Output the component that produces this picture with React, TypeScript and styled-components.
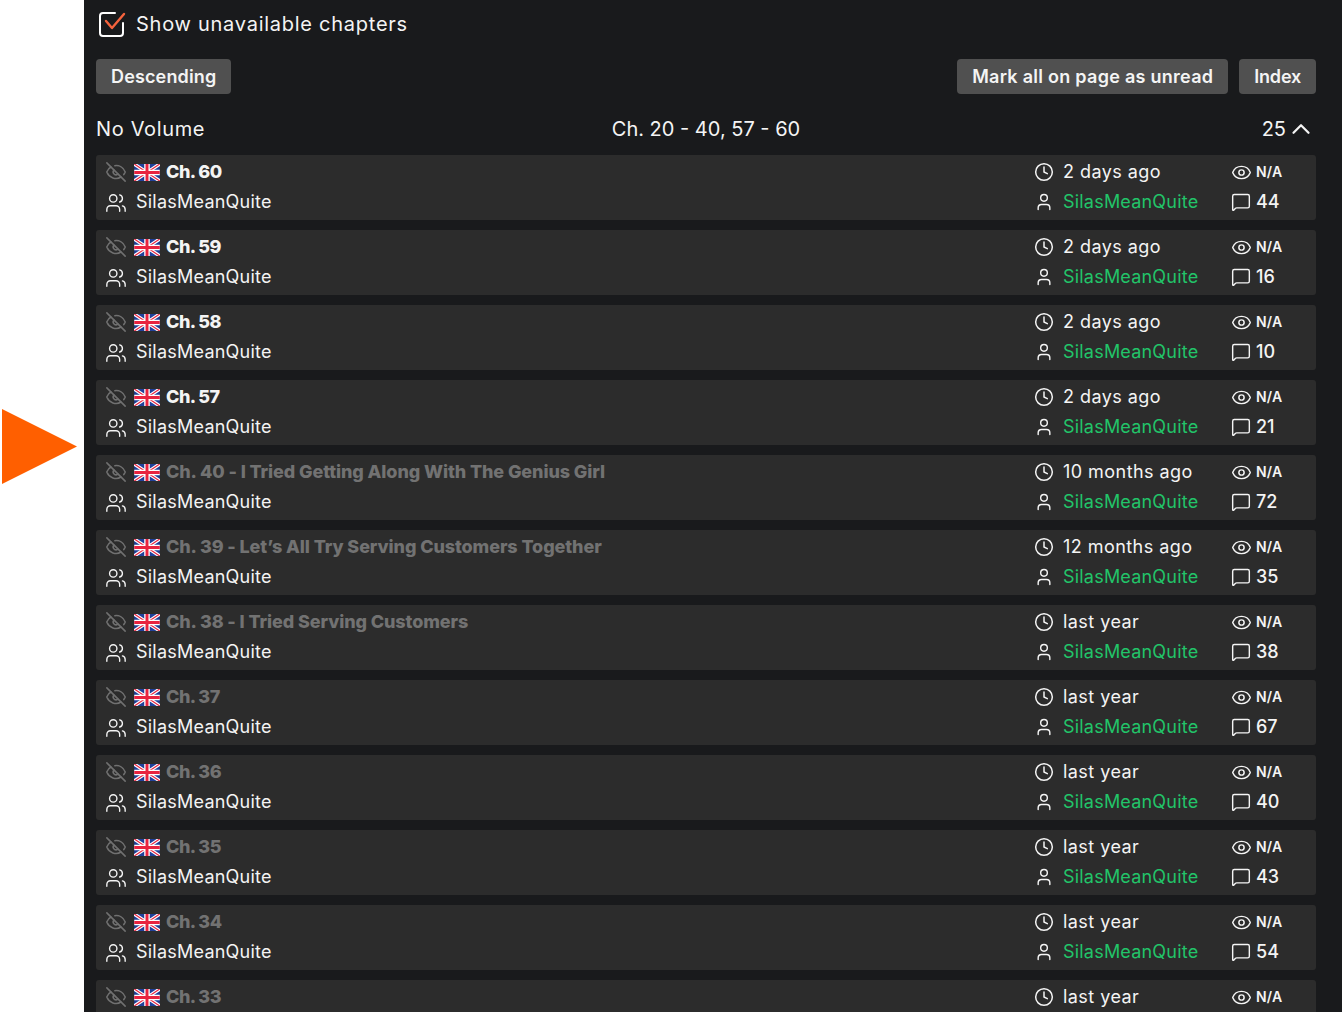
import React from 'react';
import styled, { createGlobalStyle } from 'styled-components';
import { ChevronUp, Clock, Eye, EyeOff, MessageSquare, User, Users } from 'lucide-react';

const Global = createGlobalStyle`
  html, body { margin: 0; padding: 0; background: #fff; height: 1012px; overflow: hidden; }
  #root { height: 1012px; overflow: hidden; }
  * { box-sizing: border-box; }
`;

const Page = styled.div`
  position: relative;
  height: 1012px;
  padding-left: 84px;
  overflow: hidden;
  font-family: Inter, "Noto Sans", sans-serif;
  color: #f4f4f4;
`;
const Marker = styled.svg`
  position: absolute;
  left: 1px;
  top: 408px;
`;
const Panel = styled.main`
  height: 100%;
  background: #191a1c;
  padding: 0 26px 0 12px;
  overflow: hidden;
`;
const CheckRow = styled.label`
  display: flex;
  align-items: center;
  gap: 10px;
  height: 48px;
  padding-left: 2px;
  font-size: 20px;
  letter-spacing: 0.74px;
`;
const Toolbar = styled.div`
  display: flex;
  gap: 11px;
  margin-top: 11px;
`;
const Button = styled.button<{ $tracking?: number }>`
  height: 35px;
  padding: 0 15px;
  border: 0;
  border-radius: 4px;
  background: #505050;
  color: #f4f4f4;
  font: 600 18px Inter, sans-serif;
  letter-spacing: ${(p) => p.$tracking ?? 0}px;
  white-space: nowrap;
`;
const Spacer = styled.div`
  flex: 1;
`;
const VolumeRow = styled.div`
  display: grid;
  grid-template-columns: 1fr auto 1fr;
  align-items: center;
  height: 61px;
  padding-top: 9px;
  font-size: 20px;
`;
const VolumeName = styled.span`
  letter-spacing: 0.65px;
`;
const VolumeEnd = styled.div`
  display: flex;
  align-items: center;
  justify-content: flex-end;
  gap: 0;
`;
const List = styled.div`
  display: flex;
  flex-direction: column;
  gap: 10px;
`;
const Row = styled.article`
  display: grid;
  grid-template-columns: 1fr 197px 85px;
  grid-auto-rows: 30px;
  flex: none;
  height: 65px;
  padding: 2px 0 3px 10px;
  border-radius: 3px;
  background: #2c2c2c;
  font-size: 18px;
`;
const Cell = styled.div<{ $gap?: number }>`
  display: flex;
  align-items: center;
  gap: ${(p) => p.$gap ?? 10}px;
  white-space: nowrap;
  min-width: 0;
`;
const HiddenIcon = styled(EyeOff)`
  flex: none;
  margin: 0 -1px;
`;
const GroupIcon = styled(Users)`
  flex: none;
  margin: 1px -1px 0;
`;
const Flag = styled.svg`
  flex: none;
  margin-left: -2px;
  margin-right: -4px;
`;
const ChapterTitle = styled.span<{ $muted: boolean; $short: boolean }>`
  padding-bottom: 2px;
  font-weight: 800;
  font-size: 18px;
  letter-spacing: ${(p) => (p.$short ? -0.5 : -0.1)}px;
  color: ${(p) => (p.$muted ? '#727272' : '#f4f4f4')};
`;
const Time = styled.span`
  padding-bottom: 2px;
  letter-spacing: 0.45px;
`;
const Credit = styled.span<{ $green?: boolean }>`
  padding-bottom: 2px;
  letter-spacing: ${(p) => (p.$green ? 0.2 : 0.23)}px;
  color: ${(p) => (p.$green ? '#22c469' : '#f4f4f4')};
`;
const NA = styled.span`
  padding-bottom: 2px;
  font-size: 14px;
  font-weight: 600;
  letter-spacing: 0.2px;
`;
const Count = styled.span`
  padding-bottom: 2px;
  font-weight: 500;
`;

const UnionJack = () => (
  <Flag width="26" height="17" viewBox="0 0 60 40" aria-hidden="true">
    <rect width="60" height="40" fill="#1f3f9a" />
    <path d="M0 0L60 40M60 0L0 40" stroke="#fff" strokeWidth="8" />
    <path d="M0 0L60 40M60 0L0 40" stroke="#e8233f" strokeWidth="3" />
    <path d="M30 0V40M0 20H60" stroke="#fff" strokeWidth="13" />
    <path d="M30 0V40M0 20H60" stroke="#e8233f" strokeWidth="7" />
  </Flag>
);

const rows: [string, string, string | null, boolean][] = [
  ['Ch. 60', '2 days ago', '44', false],
  ['Ch. 59', '2 days ago', '16', false],
  ['Ch. 58', '2 days ago', '10', false],
  ['Ch. 57', '2 days ago', '21', false],
  ['Ch. 40 - I Tried Getting Along With The Genius Girl', '10 months ago', '72', true],
  ['Ch. 39 - Let’s All Try Serving Customers Together', '12 months ago', '35', true],
  ['Ch. 38 - I Tried Serving Customers', 'last year', '38', true],
  ['Ch. 37', 'last year', '67', true],
  ['Ch. 36', 'last year', '40', true],
  ['Ch. 35', 'last year', '43', true],
  ['Ch. 34', 'last year', '54', true],
  ['Ch. 33', 'last year', null, true],
];

export default function App() {
  return (
    <Page>
      <Global />
      <Marker width="78" height="78" viewBox="0 0 78 78" aria-hidden="true">
        <path d="M1 1L76 38.5L1 76Z" fill="#ff5f00" />
      </Marker>
      <Panel>
        <CheckRow>
          <svg width="28" height="28" viewBox="0 0 28 28" fill="none" aria-hidden="true">
            <path d="M25 13v10a3 3 0 0 1-3 3H5a3 3 0 0 1-3-3V6a3 3 0 0 1 3-3h12" stroke="#fff" strokeWidth="2" strokeLinecap="round" />
            <path d="M8 11l6 7L26 4" stroke="#f5633d" strokeWidth="2.4" strokeLinecap="round" strokeLinejoin="round" />
          </svg>
          Show unavailable chapters
        </CheckRow>
        <Toolbar>
          <Button $tracking={0.15}>Descending</Button>
          <Spacer />
          <Button $tracking={0.27}>Mark all on page as unread</Button>
          <Button $tracking={-0.2}>Index</Button>
        </Toolbar>
        <VolumeRow>
          <VolumeName>No Volume</VolumeName>
          <span>Ch. 20 - 40, 57 - 60</span>
          <VolumeEnd>
            25
            <ChevronUp size={30} strokeWidth={1.8} />
          </VolumeEnd>
        </VolumeRow>
        <List>
          {rows.map(([title, time, count, muted]) => (
            <Row key={title}>
              <Cell>
                <HiddenIcon size={22} strokeWidth={1.7} color="#707070" />
                <UnionJack />
                <ChapterTitle $muted={muted} $short={title.length < 8}>{title}</ChapterTitle>
              </Cell>
              <Cell $gap={9}>
                <Clock size={20} strokeWidth={1.8} />
                <Time>{time}</Time>
              </Cell>
              <Cell $gap={4}>
                <Eye size={21} strokeWidth={1.7} />
                <NA>N/A</NA>
              </Cell>
              {count !== null && (
                <>
                  <Cell>
                    <GroupIcon size={22} strokeWidth={1.5} />
                    <Credit>SilasMeanQuite</Credit>
                  </Cell>
                  <Cell $gap={9}>
                    <User size={20} strokeWidth={1.7} />
                    <Credit $green>SilasMeanQuite</Credit>
                  </Cell>
                  <Cell $gap={5}>
                    <MessageSquare size={20} strokeWidth={1.7} />
                    <Count>{count}</Count>
                  </Cell>
                </>
              )}
            </Row>
          ))}
        </List>
      </Panel>
    </Page>
  );
}
